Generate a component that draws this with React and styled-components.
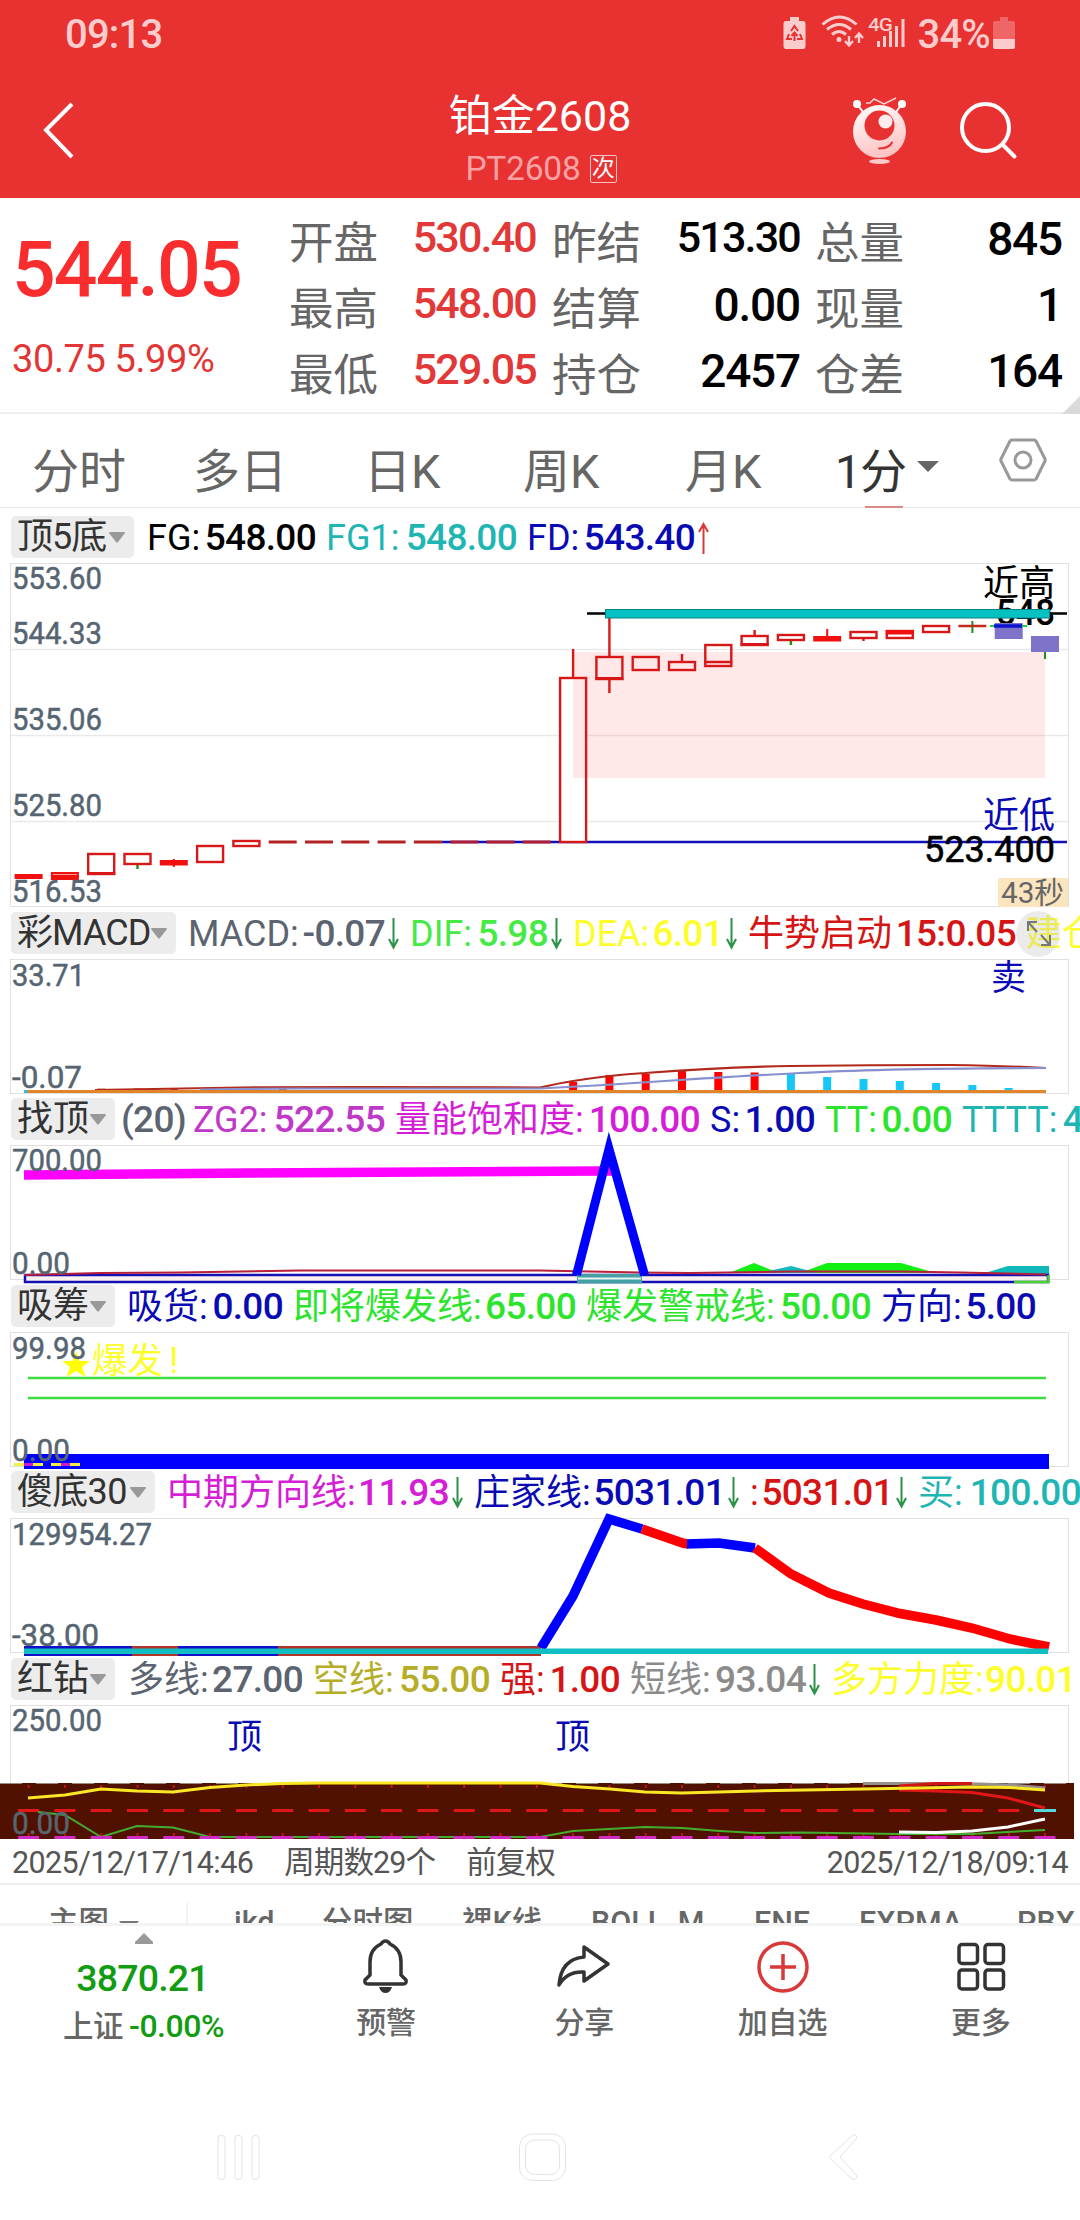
import React from 'react';
import styled, { createGlobalStyle, css } from 'styled-components';

const GlobalStyle = createGlobalStyle`
  * {
    box-sizing: border-box;
  }

  body {
    margin: 0;
    background: #fff;
    font-family: Roboto, "Noto Sans CJK SC", sans-serif;
  }

  svg {
    display: block;
  }
`;

const NAVY = '#0a0ab4';
const SLATE = '#566572';
const GREEN = '#2be42b';
const YELLOW = '#fdfd2e';
const TEAL = '#1fb5b3';
const RED = '#d51515';
const MAGENTA = '#d41fd6';

const Screen = styled.div`
  width: 1080px;
  height: 2220px;
  overflow: hidden;
  background: #fff;
`;

const Header = styled.header`
  height: 198px;
  background: #e83131;
  color: #fff;
`;

const StatusBar = styled.div`
  height: 68px;
  padding: 0 64px 0 65px;
  display: flex;
  justify-content: space-between;
  color: #fbcccc;
  font-size: 40px;
  font-weight: 500;
  line-height: 69px;
  letter-spacing: -0.8px;
`;

const StatusIcons = styled.div`
  display: flex;

  svg {
    margin-right: 8px;
  }

  svg:last-child {
    margin: 0 0 0 3px;
  }
`;

const TitleBar = styled.div`
  height: 130px;
  display: grid;
  grid-template-columns: 400px 280px 400px;
`;

const TitleText = styled.div`
  padding-top: 19px;
  text-align: center;
  font-size: 43px;
  line-height: 58px;
`;

const Code = styled.div`
  display: flex;
  justify-content: center;
  align-items: center;
  height: 48px;
  padding-left: 2px;
  font-size: 33.5px;
  line-height: 48px;
  letter-spacing: -0.2px;
  color: #f7a3a3;
`;

const Tag = styled.span`
  width: 27px;
  height: 28px;
  margin-left: 9px;
  border: 1px solid #fbc4c4;
  border-radius: 2px;
  font-size: 23px;
  line-height: 26px;
  text-align: center;
  color: #fff;
`;

const Actions = styled.div`
  display: flex;
  justify-content: flex-end;
  padding: 26px 62px 0 0;
  gap: 51px;
`;

const Back = styled.div`
  padding: 33px 0 0 42px;
`;

const Quote = styled.section`
  position: relative;
  height: 216px;
  border-bottom: 2px solid #efefef;
  display: grid;
  grid-template-columns: 289px 246px 17px 247px 16px 246px;
`;

const PriceBox = styled.div`
  padding-left: 12px;
  color: #f92d2d;
  white-space: nowrap;
`;

const Price = styled.div`
  margin-top: 30px;
  font-size: 77px;
  font-weight: 500;
  line-height: 84px;
  letter-spacing: -1.9px;
`;

const Change = styled.div`
  margin-top: 26px;
  font-size: 38px;
  line-height: 42px;
  letter-spacing: -0.4px;
  color: #e23535;
`;

const QuoteColumn = styled.div`
  padding-top: 13px;
  grid-column: ${props => props.$col};
`;

const QuoteRow = styled.div`
  height: 66px;
  display: flex;
  justify-content: space-between;
  line-height: 66px;
`;

const QuoteLabel = styled.span`
  font-size: 44.5px;
  color: #666;
`;

const QuoteValue = styled.span`
  margin-right: -1px;
  font-size: ${props => props.$size || 46}px;
  font-weight: 500;
  line-height: ${props => (props.$size ? 53 : 56)}px;
  letter-spacing: ${props => (props.$size ? -1.8 : -1.2)}px;
  color: ${props => props.$color || '#000'};
`;

const Corner = styled.div`
  position: absolute;
  right: 0;
  bottom: -2px;
  border-bottom: 18px solid #dadada;
  border-left: 18px solid transparent;
`;

const Periods = styled.nav`
  height: 94px;
  border-bottom: 1px solid #e8e8e8;
  display: flex;
  align-items: flex-start;
`;

const Period = styled.div`
  width: ${props => props.$w}px;
  padding-left: ${props => props.$pad || 0}px;
  height: 94px;
  display: flex;
  align-items: center;
  padding-top: 21px;
  font-size: 47px;
  line-height: 76px;
  white-space: nowrap;
  color: ${props => (props.$active ? '#333' : '#666')};
  ${props => props.$active && css`
    letter-spacing: -1.5px;
    background: linear-gradient(#d98a86, #d98a86) 30px 92px / 38px 2px no-repeat;

    svg {
      margin: -10px 0 0 12px;
    }
  `}
`;

const Settings = styled.div`
  padding-top: 24px;
`;

const Section = styled.section`
  height: ${props => props.$h}px;
`;

const LegendRow = styled.div`
  height: ${props => props.$h || 52}px;
  padding: ${props => props.$top || 5}px 0 0 11px;
  display: flex;
  overflow: hidden;
  position: relative;
`;

const Chip = styled.div`
  flex: none;
  width: ${props => props.$w}px;
  height: 42px;
  margin-right: ${props => props.$gap}px;
  padding: 0 9px 0 6px;
  display: flex;
  align-items: center;
  justify-content: space-between;
  border-radius: 5px;
  background: #ececec;
  color: #333;
  font-size: 36px;
  line-height: 44px;
  letter-spacing: ${props => props.$ls || 0}px;
  white-space: nowrap;
`;

const Legend = styled.div`
  flex: none;
  width: ${props => props.$w}px;
  padding-right: 11px;
  display: flex;
  font-size: 36px;
  line-height: 44px;
  white-space: nowrap;
  color: ${props => props.$color};
`;

const LegendValue = styled.b`
  margin-left: auto;
  margin-right: ${props => (props.$arrow ? 3 : -1)}px;
  font-size: 37px;
  font-weight: 500;
  letter-spacing: -0.7px;
`;

const ArrowIcon = styled.svg`
  flex: none;
  margin-top: 6px;
`;

const Expand = styled.div`
  position: absolute;
  left: 1016px;
  top: 4px;
  width: 44px;
  height: 46px;
  border-radius: 50%;
  background: rgba(190, 190, 190, 0.3);
`;

const Plot = styled.svg`
  overflow: visible;
  font-family: Roboto, "Noto Sans CJK SC", sans-serif;
`;

const DateRow = styled.div`
  height: 46px;
  padding: 0 12px;
  display: flex;
  border-bottom: 2px solid #eee;
  color: #555;
  font-size: 30.5px;
  line-height: 48px;
  white-space: nowrap;

  span {
    letter-spacing: -0.6px;
  }

  span:nth-child(2) {
    margin-left: 31px;
    letter-spacing: -0.9px;
  }

  span:nth-child(3) {
    margin-left: 31px;
    letter-spacing: -1px;
  }

  span:last-child {
    margin-left: auto;
  }
`;

const Indicators = styled.div`
  height: 38px;
  padding-left: 48px;
  display: flex;
  overflow: hidden;
  color: #666;
  font-size: 30.5px;
  font-weight: 500;
  line-height: 76px;
`;

const Indicator = styled.span`
  flex: none;
  width: ${props => props.$w}px;
  height: 76px;
  white-space: nowrap;
`;

const DownMark = styled.i`
  display: inline-block;
  margin-left: 10px;
  vertical-align: 0;
  border-top: 12px solid #777;
  border-left: 10px solid transparent;
  border-right: 10px solid transparent;
`;

const Divider = styled.div`
  flex: none;
  width: 2px;
  height: 20px;
  margin: 18px 46px 0 0;
  background: #f1f1f1;
`;

const BottomBar = styled.footer`
  height: 150px;
  border-top: 3px solid #f3f3f3;
  display: grid;
  grid-template-columns: 287px repeat(4, 198.25px);
`;

const IndexBox = styled.div`
  display: flex;
  flex-direction: column;
  align-items: center;
  padding-top: 7px;
  color: #119c11;
  font-weight: 500;

  svg {
    flex: none;
  }

  div {
    height: 60px;
    padding-right: 2px;
    font-size: 37.5px;
    line-height: 68px;
    letter-spacing: -0.8px;
  }

  p {
    margin: -7px 0 0;
    font-size: 32px;
    line-height: 59px;
    letter-spacing: -0.5px;
    white-space: nowrap;
  }

  p span {
    margin-right: 6px;
    font-size: 30.5px;
    color: #666;
  }
`;

const Action = styled.div`
  display: flex;
  flex-direction: column;
  align-items: center;
  padding-top: 11px;
  color: #666;
  font-size: 30px;
  font-weight: 500;
  line-height: 42px;

  svg {
    margin-bottom: 3px;
  }
`;

const SystemNav = styled.div`
  height: 146px;
  padding: 58px 220px 0 216px;
  display: flex;
  justify-content: space-between;

  svg:nth-child(2) {
    margin-left: -7px;
  }
`;

const STEP = 36.3;
const cx = i => 28.6 + i * STEP;
const range = (from, to) => Array.from({ length: to - from }, (_, i) => from + i);

const Arrow = ({ up }) => (
  <ArrowIcon width="11" height="32" viewBox="1 0 11 32" fill="none" stroke={up ? '#d83a3a' : '#2c9247'} strokeWidth="2">
    {up ? <path d="M6.5 32V2M2 10l4.5-8L11 10" /> : <path d="M6.5 0v30M2 21l4.5 8.5L11 21" />}
  </ArrowIcon>
);

const Caret = () => (
  <svg width="16" height="11" viewBox="0 0 16 11">
    <path d="M0 1q0-1 1-1h14q1 0 1 1L9 10q-1 1-2 0z" fill="#999" />
  </svg>
);

const Frame = ({ y, h }) => (
  <rect x="10.5" y={y + 0.5} width="1058" height={h - 1} fill="none" stroke="#e0e0e0" />
);

// Axis value, placed by its baseline
const Axis = ({ y, w, children }) => (
  <text x="12" y={y} fontSize="31" fill={SLATE} stroke={SLATE} strokeWidth="0.5" textLength={w} lengthAdjust="spacingAndGlyphs">
    {children}
  </text>
);

const candles = [
  { i: 2, top: 854, bottom: 874, base: true },
  { i: 3, top: 854, bottom: 864, low: 869, lowColor: '#1a8f1a' },
  { i: 5, top: 846, bottom: 862 },
  { i: 6, top: 841, bottom: 846 },
  { i: 15, top: 678, bottom: 842, high: 649 },
  { i: 16, top: 657, bottom: 679, high: 618, low: 693, base: true },
  { i: 17, top: 657, bottom: 670 },
  { i: 18, top: 662, bottom: 670, high: 654 },
  { i: 19, top: 645, bottom: 666 },
  { i: 20, top: 636, bottom: 645, high: 630, base: true },
  { i: 21, top: 635, bottom: 640, low: 645, lowColor: '#1a8f1a' },
  { i: 23, top: 632, bottom: 638, high: 631, low: 641 },
  { i: 24, top: 631, bottom: 638 },
  { i: 25, top: 626, bottom: 632 }
];

const Candle = ({ i, top, bottom, high, low, lowColor, base }) => (
  <g stroke="#d81818" strokeWidth="2.4" fill="none">
    {high && <path d={`M${cx(i)} ${high}V${top}`} />}
    {low && <path d={`M${cx(i)} ${bottom}V${low}`} stroke={lowColor} />}
    <rect x={cx(i) - 13} y={top} width="26" height={bottom - top} />
    {base && <path d={`M${cx(i) - 14} ${bottom - 0.5}h28`} strokeWidth="3" />}
  </g>
);

const PricePlot = () => (
  <Plot width="1080" height="344" viewBox="0 563 1080 344">
    <Frame y={563} h={344} />
    <path d="M11 649.5H1068M11 735.5H1068M11 821.5H1068" stroke="#e9e9e9" strokeWidth="1.5" />
    <rect x="573" y="652" width="472" height="126" fill="#ff2010" fillOpacity="0.1" />
    <path d="M442 842H1067" stroke="#1010b8" strokeWidth="2.4" />
    {range(7, 15).map(i => (
      <path key={i} d={`M${cx(i) - 14} 842h28`} stroke={i > 11 ? '#b01c34' : '#b32222'} strokeWidth="3" />
    ))}
    <rect x="560" y="679" width="26" height="162" fill="#fff" />
    <rect x="573" y="679" width="13" height="99" fill="#ff2010" fillOpacity="0.1" />
    <g fill="#f01010">
      <rect x={cx(0) - 14} y="874" width="28" height="5" />
      <rect x={cx(1) - 14} y="872" width="28" height="8" />
      <rect x={cx(4) - 14} y="860" width="28" height="5.5" />
      <rect x={cx(4) - 1} y="859" width="2" height="8" />
      <rect x={cx(22) - 14} y="636" width="28" height="5.5" />
      <rect x={cx(22) - 1} y="629" width="2" height="8" />
    </g>
    <path d={`M${cx(1) - 12} 874.5h24`} stroke="#ff9c9c" />
    {candles.map(c => <Candle key={c.i} {...c} />)}
    <path d={`M${cx(19) - 14} 662h28`} stroke="#d81818" strokeWidth="2.5" />
    <rect x={cx(24) - 14} y="630" width="28" height="4.5" fill="#f01010" />
    <path d={`M${cx(26)} 621V633`} stroke="#1a8f1a" strokeWidth="2" />
    <path d={`M${cx(26) - 14} 626h28`} stroke="#c22a1a" strokeWidth="2.5" />
    <g fontSize="36">
      <text x="983" y="596" textLength="72" fill="#000">近高</text>
      <text x="996" y="625" fontSize="37" fontWeight="500" textLength="59" lengthAdjust="spacingAndGlyphs">548</text>
      <text x="983" y="828" textLength="72" fill={NAVY}>近低</text>
      <text x="924" y="862" fontSize="37" stroke="#000" strokeWidth="0.6" textLength="131" lengthAdjust="spacingAndGlyphs">523.400</text>
    </g>
    <rect x={cx(27) - 14} y="623" width="28" height="16" fill="#7d73c9" />
    <path d="M990 626h37" stroke="#13d83b" strokeWidth="2" />
    <path d="M994 626h28" stroke="#0a14d0" strokeWidth="3.5" />
    <path d="M1045 652V659" stroke="#1a8f1a" strokeWidth="2" />
    <rect x="1031" y="636" width="28" height="16" fill="#7d73c9" />
    <path d="M587 613.5H1067" stroke="#000" strokeWidth="2.5" />
    <rect x="605.5" y="609.5" width="444" height="8.5" fill="#06c1c1" stroke="#078487" />
    <Axis y={589} w={90}>553.60</Axis>
    <Axis y={644} w={90}>544.33</Axis>
    <Axis y={730} w={90}>535.06</Axis>
    <Axis y={816} w={90}>525.80</Axis>
    <Axis y={902} w={90}>516.53</Axis>
    <rect x="998" y="878" width="70" height="29" rx="2" fill="#fbe5bf" />
    <text x="1001" y="903" fontSize="30" fill="#666" textLength="63" lengthAdjust="spacingAndGlyphs">43秒</text>
  </Plot>
);

const redBars = [[15, 1082], [16, 1075], [17, 1074], [18, 1071], [19, 1072], [20, 1072.5]];
const blueBars = [[21, 1074], [22, 1077], [23, 1079], [24, 1081], [25, 1083], [26, 1085], [27, 1088]];

const MacdPlot = () => (
  <Plot width="1080" height="134" viewBox="0 959 1080 134">
    <Frame y={959} h={135} />
    {redBars.map(([i, y]) => <rect key={i} x={cx(i) - 4} y={y} width="8" height={1091 - y} fill="#f00" />)}
    {blueBars.map(([i, y]) => <rect key={i} x={cx(i) - 4} y={y} width="8" height={1091 - y} fill="#16c6f7" />)}
    {range(2, 8).map(i => <rect key={i} x={cx(i) - 4} y={1089 - i * 0.2} width="8" height="3" fill="#d8452a" />)}
    <path d="M95 1090L240 1087.5L360 1087L540 1087.5Q560 1083 573 1081Q610 1075 645 1073Q720 1067 790 1066Q870 1065 950 1065Q1010 1066 1046 1068" fill="none" stroke="#b22a1c" strokeWidth="2.2" />
    <path d="M200 1089.5L300 1088.5L540 1088.5Q610 1085 680 1080Q760 1075 800 1073Q880 1068.5 1046 1068" fill="none" stroke="#8790cf" strokeWidth="2.2" />
    <rect x="24" y="1090" width="4" height="3" fill="#16c6f7" />
    <rect x="27" y="1090" width="1019" height="3" fill="#e28528" />
    <Axis y={986} w={73}>33.71</Axis>
    <Axis y={1088} w={70}>-0.07</Axis>
    <text x="991" y="990" fontSize="35" fill={NAVY}>卖</text>
  </Plot>
);

const TopPlot = () => (
  <Plot width="1080" height="135" viewBox="0 1145 1080 135">
    <Frame y={1145} h={135} />
    <path d="M24 1175L250 1173L600 1171H612" fill="none" stroke="#f0f" strokeWidth="9.5" />
    <path d="M729 1273L754 1263L779 1273zM800 1273L827 1263H901L936 1273z" fill="#12f012" />
    <path d="M760 1273L791 1266L818 1273zM985 1273L1008 1266H1049V1275z" fill="#0fb9b9" />
    <rect x="25" y="1275" width="1023" height="7" fill="#fff0f0" stroke="#1510b5" strokeWidth="2.5" />
    <rect x="577" y="1274" width="65" height="9.5" fill="#44a0a4" />
    <path d="M578 1278.5h63" stroke="#e8f4f4" strokeWidth="2" />
    <path d="M1014 1282h35M1048.5 1275v8" stroke="#45d42e" strokeWidth="2.5" />
    <path d="M24 1275L100 1273L180 1272.5L300 1270.5H540L640 1272.5L690 1273L790 1271.5H900L960 1272.5L1046 1274.5" fill="none" stroke="#b81f38" strokeWidth="2" />
    <path d="M576.5 1275L609 1149L644.5 1275" fill="none" stroke="#00f" strokeWidth="9" strokeMiterlimit="10" />
    <Axis y={1171} w={90}>700.00</Axis>
    <Axis y={1274} w={58}>0.00</Axis>
  </Plot>
);

const ChipsPlot = () => (
  <Plot width="1080" height="134" viewBox="0 1332 1080 134">
    <Frame y={1332} h={135} />
    <path d="M28 1378H1046M28 1398H1046" stroke="#3fdc3f" strokeWidth="2.4" />
    <polygon points="76,1351 79.5,1361 90,1361 82,1367 85.5,1377 76,1371 66.5,1377 70,1367 62,1361 72.5,1361" fill="#ff0" />
    <text x="92" y="1373" fontSize="35.5" fill={YELLOW}>爆发</text>
    <text x="169" y="1373" fontSize="37" fill={YELLOW}>!</text>
    <rect x="24" y="1454" width="1025" height="15" fill="#00f" />
    <path d="M14 1464.5h10m9 0h10m8 0h10m9 0h10" stroke="#f1f044" strokeWidth="3" />
    <path d="M24 1464.5h9m28 0h9" stroke="#d01ad0" strokeWidth="3" />
    <Axis y={1359} w={74}>99.98</Axis>
    <Axis y={1461} w={58}>0.00</Axis>
  </Plot>
);

const BottomPlot = () => (
  <Plot width="1080" height="135" viewBox="0 1518 1080 135">
    <Frame y={1518} h={135} />
    <rect x="24" y="1646" width="517" height="10" fill="#1010c8" />
    <path d="M132 1651h46M278 1651h263" stroke="#b3342c" strokeWidth="10" />
    <g fill="none" strokeWidth="9.5">
      <path d="M541 1648L573 1596L609 1519L642 1529" stroke="#00f" strokeMiterlimit="3" />
      <path d="M686 1544L719 1543L755 1548" stroke="#00f" />
      <path d="M642 1529L684 1543.5H687M755 1548L791 1574L829 1593L863 1604L900 1613.5L936 1620L972 1628L1010 1639L1049 1647" stroke="#f00" />
    </g>
    <rect x="24" y="1648.5" width="1024" height="5.5" fill="#0fbfc4" />
    <Axis y={1545} w={140}>129954.27</Axis>
    <Axis y={1646} w={87}>-38.00</Axis>
  </Plot>
);

const DiamondPlot = () => (
  <Plot width="1080" height="134" viewBox="0 1705 1080 134">
    <Frame y={1705} h={134} />
    <rect x="0" y="1783" width="1074" height="56" fill="#501100" />
    <path d="M0 1783.5H1074" stroke="#9a8a84" strokeDasharray="22 14" />
    {range(0, 29).map(i => (
      <g key={i} stroke="#c01414" strokeWidth="2">
        <path d={`M${cx(i)} 1785v3M${cx(i)} 1833v4`} />
        {i < 28 && <path d={`M${cx(i) - 10.5} 1810.5h21`} stroke="#e01717" strokeWidth="3" />}
      </g>
    ))}
    <path d="M1034 1810.5h22" stroke="#55dada" strokeWidth="3" />
    <g fill="none" strokeWidth="2">
      <path d="M38 1812L65 1815L101 1837L137 1826L173 1827.5L210 1837H540L573 1831L645 1827L682 1828L720 1831L755 1833L800 1832.5L899 1834H972L1008 1832L1045 1830" stroke="#43ae2c" />
      <path d="M863 1783.5H940L980 1784L1010 1785L1045 1788" stroke="#97908c" strokeWidth="3" />
      <path d="M899 1786L936 1783.5H972" stroke="#d01515" strokeWidth="3" />
      <path d="M899 1790L936 1791L972 1792.5L1008 1798L1045 1808" stroke="#e01717" strokeWidth="3" />
      <path d="M28 1798L65 1795L101 1789L137 1791L173 1792L210 1787.5L246 1785L282 1783.5L320 1783H540L573 1786.5L610 1789L645 1792L682 1793L755 1791L863 1789L972 1787L1010 1787.5L1045 1790" stroke="#fbe726" strokeWidth="3" />
      <path d="M899 1832L936 1832.5L972 1831L1008 1827L1045 1819" stroke="#fff" strokeWidth="3" />
    </g>
    {range(0, 29).map(i => (
      <path key={i} d={`M${cx(i) - 10.5} 1837.5h21`} stroke="#d02bc4" strokeWidth="3" />
    ))}
    <Axis y={1731} w={90}>250.00</Axis>
    <Axis y={1834} w={58}>0.00</Axis>
    <text x="227" y="1749" fontSize="35" fill={NAVY}>顶</text>
    <text x="555" y="1749" fontSize="35" fill={NAVY}>顶</text>
  </Plot>
);

const sections = [
  {
    h: 399, legendH: 55, top: 8, name: '顶5底', chip: 123, gap: 13, ls: -1, Plot: PricePlot,
    items: [
      { w: 179, color: '#000', label: 'FG:', value: '548.00' },
      { w: 201, color: TEAL, label: 'FG1:', value: '548.00' },
      { w: 193, color: NAVY, label: 'FD:', value: '543.40', arrow: 'up' }
    ]
  },
  {
    h: 186, name: '彩MACD', chip: 165, gap: 12, ls: -0.9, Plot: MacdPlot, expand: true,
    items: [
      { w: 222, color: '#5b6470', label: 'MACD:', value: '-0.07', arrow: 'down' },
      { w: 163, color: '#45ea45', label: 'DIF:', value: '5.98', arrow: 'down' },
      { w: 175, color: YELLOW, label: 'DEA:', value: '6.01', arrow: 'down' },
      { w: 278, color: RED, label: '牛势启动', value: '15:0.05' },
      { w: 84, color: YELLOW, label: '建仓', value: '' }
    ]
  },
  {
    h: 187, name: '找顶', chip: 104, gap: 6, Plot: TopPlot,
    items: [
      { w: 72, color: '#5b6470', label: '', value: '(20)' },
      { w: 202, color: '#bf38c8', label: 'ZG2:', value: '522.55' },
      { w: 315, color: MAGENTA, label: '量能饱和度:', value: '100.00' },
      { w: 115, color: NAVY, label: 'S:', value: '1.00' },
      { w: 137, color: GREEN, label: 'TT:', value: '0.00' },
      { w: 131, color: TEAL, label: 'TTTT:', value: '4' }
    ]
  },
  {
    h: 186, name: '吸筹', chip: 104, gap: 12, Plot: ChipsPlot,
    items: [
      { w: 166, color: NAVY, label: '吸货:', value: '0.00' },
      { w: 293, color: GREEN, label: '即将爆发线:', value: '65.00' },
      { w: 295, color: GREEN, label: '爆发警戒线:', value: '50.00' },
      { w: 165, color: NAVY, label: '方向:', value: '5.00' }
    ]
  },
  {
    h: 187, name: '傻底30', chip: 144, gap: 12, ls: -0.7, Plot: BottomPlot,
    items: [
      { w: 307, color: MAGENTA, label: '中期方向线:', value: '11.93', arrow: 'down' },
      { w: 276, color: NAVY, label: '庄家线:', value: '5031.01', arrow: 'down' },
      { w: 168, color: RED, label: ':', value: '5031.01', arrow: 'down' },
      { w: 173, color: TEAL, label: '买:', value: '100.00' }
    ]
  },
  {
    h: 186, name: '红钻', chip: 104, gap: 13, Plot: DiamondPlot,
    items: [
      { w: 185, color: '#5b6470', label: '多线:', value: '27.00' },
      { w: 187, color: '#b5ad27', label: '空线:', value: '55.00' },
      { w: 130, color: RED, label: '强:', value: '1.00' },
      { w: 201, color: '#8b8b8b', label: '短线:', value: '93.04', arrow: 'down' },
      { w: 255, color: YELLOW, label: '多方力度:', value: '90.01' }
    ]
  }
];

const LegendItem = ({ w, color, label, value, arrow }) => (
  <Legend $w={w} $color={color}>
    {label && <span>{label}</span>}
    <LegendValue $arrow={arrow}>{value}</LegendValue>
    {arrow && <Arrow up={arrow === 'up'} />}
  </Legend>
);

const IndicatorSection = ({ h, legendH, top, name, chip, gap, ls, items, Plot: Chart, expand }) => (
  <Section $h={h}>
    <LegendRow $h={legendH} $top={top}>
      <Chip $w={chip} $gap={gap} $ls={ls}>{name}<Caret /></Chip>
      {items.map(item => <LegendItem key={item.label + item.value} {...item} />)}
      {expand && (
        <Expand>
          <svg width="44" height="44" viewBox="0 0 44 44" fill="none" stroke="#777" strokeWidth="2">
            <path d="M12 20V11h9M12 11l9 10M34 24v10h-9M34 34l-9-10" />
          </svg>
        </Expand>
      )}
    </LegendRow>
    <Chart />
  </Section>
);

const quotes = [
  { col: 2, color: '#e23838', size: 43, rows: [['开盘', '530.40'], ['最高', '548.00'], ['最低', '529.05']] },
  { col: 4, rows: [['昨结', '513.30'], ['结算', '0.00'], ['持仓', '2457']] },
  { col: 6, rows: [['总量', '845'], ['现量', '1'], ['仓差', '164']] }
];

const StatusGlyphs = () => (
  <svg width="126" height="68" viewBox="782 0 126 68" fill="#fbcccc">
    <path d="M789 17h9v4h4q2.500 0 2.500 3v22q0 3-2.500 3h-17q-2.500 0-2.500-3V24q0-3 2.500-3h4z" />
    <path d="M790 31l3.500-5 3.500 5M788 34l-2 5h5M799 34l2 5h-5M793.500 41v-8m-3 3l3-3.500 3 3.500" fill="none" stroke="#e83131" strokeWidth="2" />
    <g fill="none" stroke="#fbcccc" strokeWidth="3">
      <path d="M821.500 24.500q17-15 34 0M826 29.500q12.500-10 24 0M831 34.500q7-6 14 0" />
      <path d="M848 36v9m-4-4l4 4.500 4-4.500M858 43v-9m-4 4l4-4.500 4 4.500" strokeWidth="2.4" />
    </g>
    <circle cx="838" cy="39.500" r="2.500" />
    <text x="867" y="30.500" fontSize="19" textLength="24" lengthAdjust="spacingAndGlyphs">4G</text>
    <path d="M876 41h3v6h-3zM882 36h3v11h-3zM888 31h3v16h-3zM894 26h3v21h-3zM900.500 19h3v28h-3z" />
  </svg>
);

const App = () => (
  <Screen>
    <GlobalStyle />
    <Header>
      <StatusBar>
        <span>09:13</span>
        <StatusIcons>
          <StatusGlyphs />
          <span>34%</span>
          <svg width="23" height="68" viewBox="0 0 23 68" fill="#fbcccc">
            <path d="M7 17h8v4h5q2 0 2 2v16H0V23q0-2 2-2h5z" opacity="0.35" />
            <path d="M0 39h22v8q0 2-2 2H2q-2 0-2-2z" />
          </svg>
        </StatusIcons>
      </StatusBar>
      <TitleBar>
        <Back>
          <svg width="32" height="58" viewBox="0 0 32 58" fill="none" stroke="#fff" strokeWidth="4">
            <path d="M30 3L4 29L30 56" />
          </svg>
        </Back>
        <div>
          <TitleText>铂金2608</TitleText>
          <Code>PT2608<Tag>次</Tag></Code>
        </div>
        <Actions>
          <svg width="56" height="72" viewBox="851 94 56 72">
            <defs>
              <linearGradient id="body" x1="0" y1="0" x2="0.3" y2="1">
                <stop offset="0" stopColor="#fff" />
                <stop offset="1" stopColor="#ffc4c4" />
              </linearGradient>
            </defs>
            <path d="M866 103h4l4-4 10 5 12-6" fill="none" stroke="#fbd0d0" strokeWidth="1.5" />
            <path d="M857 104l6 8M902 104l-6 8" stroke="#fff" strokeWidth="2" />
            <circle cx="857" cy="104" r="4" fill="#fff" />
            <circle cx="902" cy="104" r="4" fill="#fff" />
            <circle cx="879.5" cy="131.5" r="26.5" fill="url(#body)" />
            <circle cx="879.5" cy="125.5" r="15" fill="#e83131" />
            <circle cx="885.500" cy="121.5" r="7" fill="#ffecec" />
            <path d="M879 148.5q10 0 13-6" fill="none" stroke="#e83131" strokeWidth="2" strokeLinecap="round" />
            <ellipse cx="879.5" cy="161.500" rx="10.5" ry="2.500" fill="#ffcaca" />
          </svg>
          <svg width="60" height="72" viewBox="956 94 60 72" fill="none" stroke="#fff" strokeWidth="4" strokeLinecap="round">
            <circle cx="983.5" cy="127.5" r="23.5" />
            <path d="M1001 145l11.5 11.5" />
          </svg>
        </Actions>
      </TitleBar>
    </Header>
    <Quote>
      <PriceBox>
        <Price>544.05</Price>
        <Change>30.75 5.99%</Change>
      </PriceBox>
      {quotes.map(({ col, color, size, rows }) => (
        <QuoteColumn key={col} $col={col}>
          {rows.map(([label, value]) => (
            <QuoteRow key={label}>
              <QuoteLabel>{label}</QuoteLabel>
              <QuoteValue $color={color} $size={value === '513.30' ? 43 : size}>{value}</QuoteValue>
            </QuoteRow>
          ))}
        </QuoteColumn>
      ))}
      <Corner />
    </Quote>
    <Periods>
      <Period $w={193} $pad={32}>分时</Period>
      <Period $w={171}>多日</Period>
      <Period $w={159}>日K</Period>
      <Period $w={162}>周K</Period>
      <Period $w={150}>月K</Period>
      <Period $w={164} $active>
        1分
        <svg width="22" height="11" viewBox="0 0 22 11"><path d="M0 0h22L11 11z" fill="#666" /></svg>
      </Period>
      <Settings>
        <svg width="48" height="44" viewBox="0 0 48 44" fill="none" stroke="#999" strokeWidth="3">
          <path d="M13 2h22q1 0 2 1l9 18q.5 1 0 2l-9 18q-1 1-2 1H13q-1 0-2-1L2 23q-.5-1 0-2l9-18q1-1 2-1z" />
          <circle cx="24" cy="22" r="8" />
        </svg>
      </Settings>
    </Periods>
    {sections.map(section => <IndicatorSection key={section.name} {...section} />)}
    <DateRow>
      <span>2025/12/17/14:46</span>
      <span>周期数29个</span>
      <span>前复权</span>
      <span>2025/12/18/09:14</span>
    </DateRow>
    <Indicators>
      <Indicator $w={138}>主图<DownMark /></Indicator>
      <Divider />
      <Indicator $w={88}>jkd</Indicator>
      <Indicator $w={140}>分时图</Indicator>
      <Indicator $w={129}>裸K线</Indicator>
      <Indicator $w={163}>BOLL_M</Indicator>
      <Indicator $w={105}>ENE</Indicator>
      <Indicator $w={158}>EXPMA</Indicator>
      <Indicator $w={100}>PBX</Indicator>
    </Indicators>
    <BottomBar>
      <IndexBox>
        <svg width="18" height="11" viewBox="0 0 18 11"><path d="M9 0l9 9v2H0V9z" fill="#999" /></svg>
        <div>3870.21</div>
        <p><span>上证</span>-0.00%</p>
      </IndexBox>
      <Action>
        <svg width="54" height="62" viewBox="360 1937 54 62" fill="none" stroke="#333" strokeWidth="3.5">
          <path d="M371 1975v-13q0-13 11-18 2-3 4.5-3t4.5 3q11 5 11 18v13l5 5q1 4-3 4h-35q-4 0-3-4z" strokeLinejoin="round" />
          <path d="M380 1987h13q-2 6-6.5 6t-6.5-6z" fill="#333" stroke="none" />
        </svg>
        预警
      </Action>
      <Action>
        <svg width="58" height="62" viewBox="555 1937 58 62" fill="none" stroke="#333" strokeWidth="3.5" strokeLinejoin="round">
          <path d="M584 1947l24 17-24 17v-9q-17-1-25 13 2-26 25-28z" />
        </svg>
        分享
      </Action>
      <Action>
        <svg width="56" height="62" viewBox="755 1937 56 62" fill="none" stroke="#d83a3a" strokeWidth="3.5">
          <circle cx="783" cy="1967" r="24" />
          <path d="M770 1967h26M783 1954v26" />
        </svg>
        加自选
      </Action>
      <Action>
        <svg width="56" height="62" viewBox="952 1937 56 62" fill="none" stroke="#333" strokeWidth="3.5">
          <rect x="958" y="1944.5" width="18.5" height="19" rx="3" />
          <rect x="984" y="1944.5" width="18.5" height="19" rx="3" />
          <rect x="958" y="1970" width="18.5" height="19" rx="3" />
          <rect x="984" y="1970" width="18.5" height="19" rx="3" />
        </svg>
        更多
      </Action>
    </BottomBar>
    <SystemNav>
      <svg width="46" height="54" viewBox="216 2132 46 54" fill="none" stroke="#e3e3e3">
        <rect x="218" y="2136.5" width="7" height="44" rx="3" />
        <rect x="235" y="2136.5" width="7" height="44" rx="3" />
        <rect x="252" y="2136.5" width="7" height="44" rx="3" />
      </svg>
      <svg width="54" height="54" viewBox="513 2132 54 54" fill="none" stroke="#e3e3e3">
        <rect x="517.5" y="2135" width="46" height="46.5" rx="13" />
        <rect x="523.5" y="2141" width="34" height="34.5" rx="9" />
      </svg>
      <svg width="32" height="54" viewBox="828 2132 32 54" fill="none" stroke="#e3e3e3">
        <path d="M852 2137q4-3 5 2l-17 19 17 19q-1 5-5 3l-23-22z" />
      </svg>
    </SystemNav>
  </Screen>
);

export default App;
